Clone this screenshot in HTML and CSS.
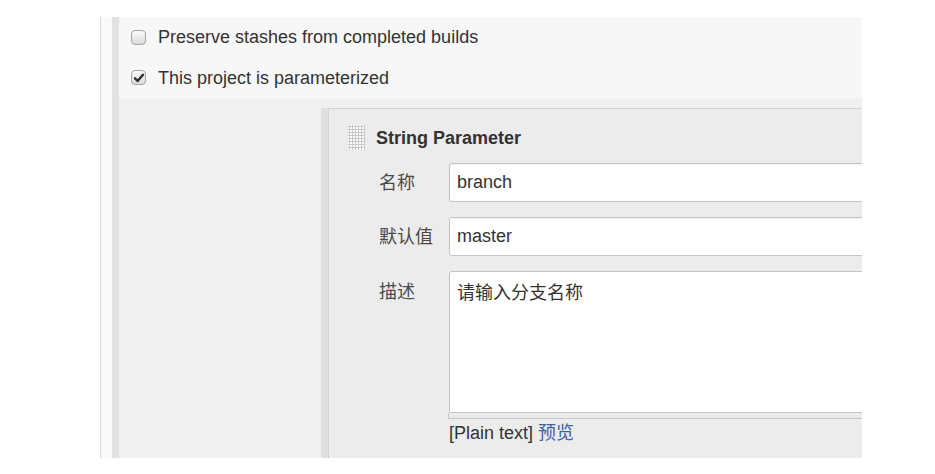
FILE: index.html
```html
<!DOCTYPE html>
<html lang="zh">
<head>
<meta charset="utf-8">
<title>String Parameter</title>
<link rel="stylesheet" href="styles.css">
</head>
<body>
<div class="frame">
  <div class="rail"></div>
  <div class="main">
    <div class="options">
      <label class="opt"><span class="cb"></span><span>Preserve stashes from completed builds</span></label>
      <label class="opt"><span class="cb checked"><svg width="12" height="12" viewBox="0 0 12 12"><path d="M2 6.3 L4.6 9 L10 2.8" fill="none" stroke="#2b2b2b" stroke-width="2.4" stroke-linecap="round" stroke-linejoin="round"/></svg></span><span>This project is parameterized</span></label>
    </div>
    <div class="nested">
      <div class="rail inner-rail"></div>
      <div class="box">
        <div class="title-row">
          <span class="grip"></span>
          <span class="title">String Parameter</span>
        </div>
        <div class="fields">
          <div class="label">名称</div>
          <input class="field" type="text" value="branch">
          <div class="label">默认值</div>
          <input class="field" type="text" value="master">
          <div class="label label-top">描述</div>
          <div class="area-wrap">
            <textarea class="area">请输入分支名称</textarea>
            <div class="grippie"></div>
            <div class="hint">[Plain text] <a href="#" class="link">预览</a></div>
          </div>
        </div>
      </div>
    </div>
  </div>
</div>
</body>
</html>
```
FILE: styles.css
```css
html, body {
  margin: 0;
  padding: 0;
  background: #ffffff;
}
body {
  font-family: "Liberation Sans", "Noto Sans CJK SC", sans-serif;
  font-size: 18px;
  color: #333333;
}
.frame {
  display: flex;
  box-sizing: border-box;
  margin: 17px 0 0 100px;
  width: 762px;
  height: 441px;
  overflow: hidden;
  border-left: 1px solid #dadada;
  padding-left: 11px;
  background: #fafafa;
}
.rail {
  flex: none;
  width: 7px;
  background: #e2e2e2;
}
.main {
  flex: 1;
  display: flex;
  flex-direction: column;
  min-width: 0;
}
.options {
  background: #f7f7f7;
  height: 81px;
  padding-left: 12px;
  display: flex;
  flex-direction: column;
}
.opt {
  display: flex;
  align-items: center;
  height: 40px;
  gap: 12px;
  line-height: 22px;
}
.opt + .opt {
  height: 41px;
}
.cb {
  flex: none;
  box-sizing: border-box;
  width: 15px;
  height: 15px;
  border: 1px solid #a6a6a6;
  border-radius: 4px;
  background: linear-gradient(#fbfbfb, #d9d9d9);
  display: flex;
  align-items: center;
  justify-content: center;
}
.cb svg {
  display: block;
}
.nested {
  flex: 1;
  display: flex;
  background: #f0f0f0;
  padding: 10px 0 0 202px;
  min-height: 0;
}
.inner-rail {
  background: #e0e0e0;
}
.box {
  flex: 1;
  min-width: 0;
  border-left: 1px solid #d2d2d2;
  border-top: 1px solid #d2d2d2;
  background: #ececec;
}
.title-row {
  display: flex;
  align-items: center;
  gap: 11px;
  padding: 16px 0 0 19px;
  height: 25px;
}
.grip {
  flex: none;
  width: 17px;
  height: 25px;
  background-color: #fbfbfb;
  background-image: radial-gradient(circle, #c8c8c8 1px, transparent 1.3px);
  background-size: 3px 3px;
  background-position: 0 0;
}
.title {
  font-weight: bold;
  color: #333333;
  line-height: 22px;
}
.fields {
  display: grid;
  grid-template-columns: 70px 480px;
  row-gap: 15px;
  margin-top: 13px;
  padding-left: 50px;
}
.label {
  display: flex;
  align-items: center;
  color: #4a4a4a;
  line-height: 22px;
}
.label-top {
  align-items: flex-start;
  padding-top: 10px;
}
.field {
  box-sizing: border-box;
  height: 39px;
  width: 100%;
  margin: 0;
  padding: 0 7px;
  font: inherit;
  color: #333333;
  border: 1px solid #c4c4c4;
  border-radius: 3px;
  background: #ffffff;
  box-shadow: inset 0 1px 1px rgba(0, 0, 0, 0.06);
  outline: none;
}
.area-wrap {
  display: flex;
  flex-direction: column;
}
.area {
  box-sizing: border-box;
  display: block;
  width: 100%;
  height: 142px;
  margin: 0;
  padding: 10px 7px;
  font: inherit;
  line-height: 22px;
  color: #333333;
  border: 1px solid #c4c4c4;
  border-radius: 3px 3px 0 0;
  background: #ffffff;
  resize: none;
  outline: none;
}
.grippie {
  box-sizing: border-box;
  height: 6px;
  margin-left: -1px;
  border-left: 1px solid #c8c8c8;
  border-bottom: 1px solid #c8c8c8;
  background: #eaeaea;
}
.hint {
  margin-top: 3px;
  line-height: 22px;
  color: #333333;
}
.link {
  color: #3b62a5;
  text-decoration: none;
}
```
